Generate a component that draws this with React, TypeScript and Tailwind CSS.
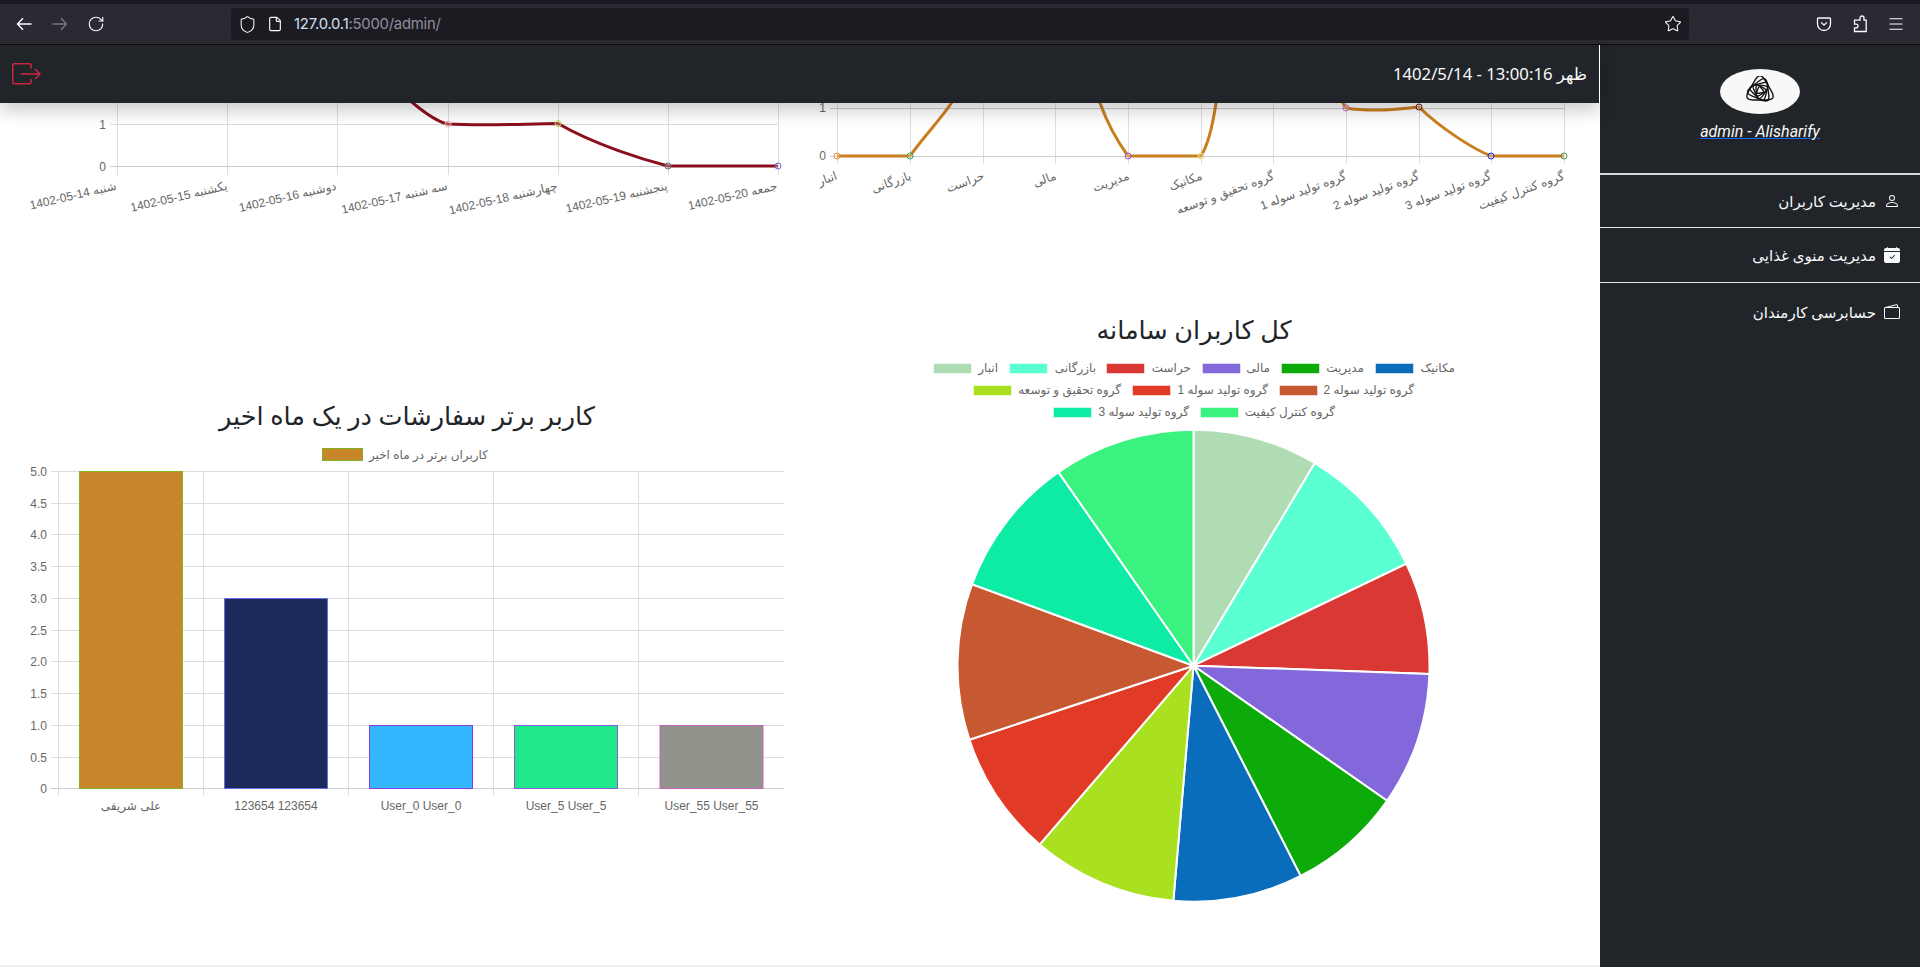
import React from "react";
import { BsPerson, BsCalendarCheckFill, BsWallet2 } from "react-icons/bs";
import { RotateCw, Shield, File, Star, Menu } from "lucide-react";

const chartFont = '"Liberation Sans", "DejaVu Sans", sans-serif';
const grid = "#dedede";
const gridDark = "#cccccc";
const label = "#666666";

function triangle(R: number, rot: number) {
  const t = 0.3;
  const c = [0, 120, 240].map((a) => {
    const r = ((a + rot - 90) * Math.PI) / 180;
    return [R * Math.cos(r), R * Math.sin(r)];
  });
  const mix = (a: number[], b: number[], k: number) => `${(a[0] + (b[0] - a[0]) * k).toFixed(2)} ${(a[1] + (b[1] - a[1]) * k).toFixed(2)}`;
  let d = `M ${mix(c[0], c[1], t)}`;
  for (let i = 0; i < 3; i++) {
    const p = c[(i + 1) % 3];
    const n = c[(i + 2) % 3];
    d += ` L ${mix(p, c[i], t)} Q ${p[0].toFixed(2)} ${p[1].toFixed(2)} ${mix(p, n, t)}`;
  }
  return d + " Z";
}

function Logo() {
  const rings = [19, 16.2, 13.4, 10.6, 7.8, 5];
  return (
    <svg width="32" height="32" viewBox="-16 -14.5 32 32" fill="none" stroke="#111" strokeWidth="1.35">
      {rings.map((R, i) => (
        <path key={R} d={triangle(R, i * 22)} />
      ))}
    </svg>
  );
}

function BrowserBar() {
  return (
    <div className="shrink-0">
      <div className="h-1 bg-[#1c1b22]" />
      <div className="flex h-10 items-center bg-[#2b2a33] text-[#fbfbfe]">
        <div className="flex w-[231px] items-center">
          <svg width="16" height="16" viewBox="0 0 16 16" fill="none" stroke="currentColor" strokeWidth="1.4" className="ml-4">
            <path d="M15.5 8H1.5M7 2.2 1.5 8 7 13.8" />
          </svg>
          <svg width="16" height="16" viewBox="0 0 16 16" fill="none" stroke="currentColor" strokeWidth="1.4" className="ml-5 text-[#77767c]">
            <path d="M.5 8h14M9 2.2 14.5 8 9 13.8" />
          </svg>
          <RotateCw size={18} strokeWidth={1.5} className="ml-[19px]" />
        </div>
        <div className="flex h-8 w-[1458px] items-center rounded bg-[#1c1b22] pl-[7px]" style={{ fontFamily: '"Inter", sans-serif' }}>
          <Shield size={19} strokeWidth={1.3} />
          <File size={16} strokeWidth={1.7} className="ml-[10px]" />
          <span className="ml-[11px] text-[14.8px] tracking-[-0.2px] text-[#cfe0f5]">
            127.0.0.1<span className="text-[#8f8f9d]">:5000/admin/</span>
          </span>
          <Star size={18} strokeWidth={1.4} className="ml-auto mr-[7px]" />
        </div>
        <div className="ml-auto flex items-center">
          <svg width="16" height="16" viewBox="0 0 16 16" fill="none" stroke="currentColor" strokeWidth="1.3" className="mr-5">
            <path d="M2.5 2h11a1 1 0 0 1 1 1v5a6.5 6.5 0 0 1-13 0V3a1 1 0 0 1 1-1z" />
            <path d="M5.2 6.4 8 9.2l2.8-2.8" />
          </svg>
          <svg width="16" height="18" viewBox="0 0 16 18" fill="none" stroke="currentColor" strokeWidth="1.3" className="mr-[19px]">
            <path d="M8 4.5V3a2 2 0 0 1 4 0v2.2h2.2v11.3H2.5v-3.6h1.6a1.9 1.9 0 0 0 0-3.8H2.5V5.2H8z" />
          </svg>
          <Menu size={18} strokeWidth={1.5} className="mr-[15px]" />
        </div>
      </div>
      <div className="h-px bg-[#0c0c0d]" />
    </div>
  );
}

function Header() {
  return (
    <header className="relative z-10 flex h-[58px] shrink-0 items-center justify-between border-r border-white bg-[#212529] pl-3 pr-3 shadow-[0_8px_16px_rgba(0,0,0,0.2)]">
      <svg width="29" height="22" viewBox="0 0 29 22" fill="none" stroke="#c9283e" strokeWidth="1.5">
        <path d="M19 5.5V2a1.2 1.2 0 0 0-1.2-1.2H1.9A1.2 1.2 0 0 0 .8 2v17.6a1.2 1.2 0 0 0 1.2 1.2h15.8a1.2 1.2 0 0 0 1.2-1.2V16" />
        <path d="M9 11h19M23 6l5 5-5 5" />
      </svg>
      <div dir="rtl" className="text-[16.7px] text-[#f8f9fa]" style={{ fontFamily: '"Noto Sans", "DejaVu Sans", sans-serif' }}>
        ظهر 13:00:16 - 1402/5/14
      </div>
    </header>
  );
}

function Ring({ x, y, c }: { x: number; y: number; c: string }) {
  return <circle cx={x} cy={y} r={3} fill="rgba(255,255,255,0.25)" stroke={c} strokeWidth={1} />;
}

const weekLabels: [number, string][] = [
  [117, "1402-05-14 شنبه"],
  [228, "1402-05-15 یکشنبه"],
  [337, "1402-05-16 دوشنبه"],
  [448, "1402-05-17 سه شنبه"],
  [558, "1402-05-18 چهارشنبه"],
  [668, "1402-05-19 پنجشنبه"],
  [778, "1402-05-20 جمعه"],
];

function WeekChart() {
  const xs = [117.5, 227.5, 337.5, 448.5, 558.5, 668.5, 778.5];
  return (
    <svg width="800" height="197" viewBox="0 103 800 197" style={{ fontFamily: chartFont }}>
      {xs.map((x) => (
        <line key={x} x1={x} x2={x} y1="95" y2="175" stroke={grid} />
      ))}
      <line x1="110" x2="779" y1="124.5" y2="124.5" stroke={grid} />
      <line x1="110" x2="779" y1="166.5" y2="166.5" stroke={gridDark} />
      <text x="106" y="129" fontSize="12" fill={label} textAnchor="end">1</text>
      <text x="106" y="171" fontSize="12" fill={label} textAnchor="end">0</text>
      <path d="M405 97 L413 103 C425 113 438 122 448 124 C485 126 520 124 558 123.5 C595 145 645 160 668 166 L778 166" fill="none" stroke="#8b0f1c" strokeWidth="3" />
      <Ring x={448} y={124} c="#e8b9b0" />
      <Ring x={558} y={123.5} c="#c6d44a" />
      <Ring x={668} y={166} c="#666a7a" />
      <Ring x={778} y={166} c="#6a66d8" />
      {weekLabels.map(([x, t]) => (
        <text key={x} x={x} y={189.5} fontSize="12" fill={label} textAnchor="end" transform={`rotate(-13 ${x} 189.5)`}>{t}</text>
      ))}
    </svg>
  );
}

const deptLabels: [number, string][] = [
  [838, "انبار"],
  [912, "بازرگانی"],
  [985, "حراست"],
  [1057, "مالی"],
  [1130, "مدیریت"],
  [1203, "مکانیک"],
  [1275, "گروه تحقیق و توسعه"],
  [1347, "گروه تولید سوله 1"],
  [1420, "گروه تولید سوله 2"],
  [1492, "گروه تولید سوله 3"],
  [1565, "گروه کنترل کیفیت"],
];

function DeptChart() {
  const xs = [837.5, 910.5, 983.5, 1055.5, 1128.5, 1201.5, 1273.5, 1346.5, 1419.5, 1491.5, 1564.5];
  return (
    <svg width="800" height="197" viewBox="800 103 800 197" style={{ fontFamily: chartFont }}>
      {xs.map((x) => (
        <line key={x} x1={x} x2={x} y1="95" y2="164" stroke={grid} />
      ))}
      <line x1="830" x2="1565" y1="108.5" y2="108.5" stroke={gridDark} />
      <line x1="830" x2="1565" y1="156.5" y2="156.5" stroke={gridDark} />
      <text x="826" y="112" fontSize="12" fill={label} textAnchor="end">1</text>
      <text x="826" y="160" fontSize="12" fill={label} textAnchor="end">0</text>
      <path d="M837 156 L910 156 C925 135 940 120 951.5 103 L960 90 M1098 95 L1100 103 C1108 125 1120 145 1128 156 L1201 156 C1206 148 1212 130 1216 103 L1218 90 M1340 95 L1343 103 C1345 107 1346 108 1346 108 C1370 112 1395 110 1419 107 C1440 128 1475 150 1491 156 L1564 156" fill="none" stroke="#ca7f1f" strokeWidth="3" />
      <Ring x={837} y={156} c="#e8903a" />
      <Ring x={910} y={156} c="#2fa86a" />
      <Ring x={1128} y={156} c="#9c4fc4" />
      <Ring x={1201} y={156} c="#e8e070" />
      <Ring x={1346} y={108} c="#d86cb8" />
      <Ring x={1419} y={107} c="#7a1420" />
      <Ring x={1491} y={156} c="#1a2ce0" />
      <Ring x={1564} y={156} c="#4a9040" />
      {deptLabels.map(([x, t]) => (
        <text key={x} x={x} y={179} fontSize="12" fill={label} textAnchor="end" transform={`rotate(-20 ${x} 179)`}>{t}</text>
      ))}
    </svg>
  );
}

const yTicks = ["5.0", "4.5", "4.0", "3.5", "3.0", "2.5", "2.0", "1.5", "1.0", "0.5", "0"];
const bars = [
  { x: 79, y: 471, fill: "#c8862b", stroke: "#7fb51f", name: "علی شریفی" },
  { x: 224, y: 598, fill: "#1b2c5a", stroke: "#6a6ae8", name: "123654 123654" },
  { x: 369, y: 725, fill: "#33b8ff", stroke: "#8a3ee0", name: "User_0 User_0" },
  { x: 514, y: 725, fill: "#20e88a", stroke: "#8a5ae0", name: "User_5 User_5" },
  { x: 659.5, y: 725, fill: "#92948c", stroke: "#c860c8", name: "User_55 User_55" },
];

function BarChart() {
  return (
    <svg width="800" height="380" viewBox="0 441 800 380" style={{ fontFamily: chartFont }}>
      <rect x="322.5" y="448.5" width="40" height="12" fill="#c8862b" stroke="#7fb51f" />
      <text x="488" y="459" fontSize="12" fill={label} textAnchor="end">کاربران برتر در ماه اخیر</text>
      {[58.5, 203.5, 348.5, 493.5, 638.5].map((x) => (
        <line key={x} x1={x} x2={x} y1="471" y2="796" stroke={grid} />
      ))}
      {yTicks.map((t, i) => {
        const y = Math.round(471 + i * 31.73) + 0.5;
        return (
          <g key={t}>
            <line x1="51" x2="784" y1={y} y2={y} stroke={i === 10 ? gridDark : grid} />
            <text x="47" y={y + 4} fontSize="12" fill={label} textAnchor="end">{t}</text>
          </g>
        );
      })}
      {bars.map((b) => (
        <g key={b.x}>
          <rect x={b.x + 0.5} y={b.y + 0.5} width="103" height={788 - b.y} fill={b.fill} stroke={b.stroke} />
          <text x={b.x + 52} y="810" fontSize="12" fill={label} textAnchor="middle">{b.name}</text>
        </g>
      ))}
    </svg>
  );
}

const slices = [
  { to: 30.9, c: "#b0dcb4", name: "انبار" },
  { to: 64.4, c: "#5affd2", name: "بازرگانی" },
  { to: 92, c: "#da3835", name: "حراست" },
  { to: 124.9, c: "#8268db", name: "مالی" },
  { to: 153, c: "#0dab09", name: "مدیریت" },
  { to: 184.9, c: "#0a6dbc", name: "مکانیک" },
  { to: 220.7, c: "#a9e01f", name: "گروه تحقیق و توسعه" },
  { to: 251.7, c: "#e13b27", name: "گروه تولید سوله 1" },
  { to: 290.2, c: "#c65932", name: "گروه تولید سوله 2" },
  { to: 325.1, c: "#0deba5", name: "گروه تولید سوله 3" },
  { to: 360, c: "#3af27f", name: "گروه کنترل کیفیت" },
];

const legend: { sx: number; tx: number; y: number; i: number }[] = [
  { sx: 933, tx: 998, y: 363, i: 0 },
  { sx: 1009, tx: 1096, y: 363, i: 1 },
  { sx: 1106, tx: 1191, y: 363, i: 2 },
  { sx: 1202, tx: 1270, y: 363, i: 3 },
  { sx: 1281, tx: 1364, y: 363, i: 4 },
  { sx: 1375, tx: 1455, y: 363, i: 5 },
  { sx: 973, tx: 1121, y: 385, i: 6 },
  { sx: 1132, tx: 1268, y: 385, i: 7 },
  { sx: 1279, tx: 1414, y: 385, i: 8 },
  { sx: 1053, tx: 1189, y: 407, i: 9 },
  { sx: 1200, tx: 1335, y: 407, i: 10 },
];

function PieChart() {
  const cx = 1193.5;
  const cy = 665.7;
  const r = 236;
  const pt = (a: number) => {
    const t = (a * Math.PI) / 180;
    return `${(cx + r * Math.sin(t)).toFixed(2)} ${(cy - r * Math.cos(t)).toFixed(2)}`;
  };
  let from = 0;
  return (
    <svg width="800" height="560" viewBox="800 356 800 560" style={{ fontFamily: chartFont }}>
      {legend.map((l) => (
        <g key={l.i}>
          <rect x={l.sx + 0.5} y={l.y + 0.5} width="38" height="10" fill={slices[l.i].c} stroke="rgba(255,255,255,0.5)" />
          <text x={l.tx} y={l.y + 9} fontSize="12" fill={label} textAnchor="end">{slices[l.i].name}</text>
        </g>
      ))}
      {slices.map((s) => {
        const d = `M ${cx} ${cy} L ${pt(from)} A ${r} ${r} 0 0 1 ${pt(s.to)} Z`;
        from = s.to;
        return <path key={s.name} d={d} fill={s.c} stroke="#fff" strokeWidth="2" />;
      })}
    </svg>
  );
}

function Title({ children, className }: { children: React.ReactNode; className: string }) {
  return (
    <h2 dir="rtl" className={`h-12 text-center text-[25.5px] leading-[48px] text-[#212529] ${className}`} style={{ fontFamily: '"Noto Sans", "DejaVu Sans", sans-serif' }}>
      {children}
    </h2>
  );
}

function Sidebar() {
  const items = [
    { icon: <BsPerson size={16} />, t: "مدیریت کاربران", h: "h-[53px]" },
    { icon: <BsCalendarCheckFill size={16} />, t: "مدیریت منوی غذایی", h: "h-[55px]" },
    { icon: <BsWallet2 size={16} />, t: "حسابرسی کارمندان", h: "h-[58px]" },
  ];
  return (
    <aside className="flex w-80 shrink-0 flex-col bg-[#212529] text-[#f8f9fa]">
      <div className="flex h-[130px] flex-col items-center border-b-2 border-[#d8d8d8] pt-6">
        <div className="flex h-[45px] w-20 items-center justify-center rounded-[50%] bg-[#f8f8f8]">
          <Logo />
        </div>
        <span className="mt-[6px] text-[16px] italic leading-6 underline decoration-[#0d6efd]" style={{ fontFamily: "Roboto, sans-serif" }}>
          admin - Alisharify
        </span>
      </div>
      {items.map((it, i) => (
        <div key={it.t} dir="rtl" className={`flex items-center gap-2 px-5 ${it.h} ${i < 2 ? "border-b border-[#e6e6e6]" : ""}`} style={{ fontFamily: '"Noto Sans", "DejaVu Sans", sans-serif' }}>
          {it.icon}
          <span className="text-[15px]">{it.t}</span>
        </div>
      ))}
    </aside>
  );
}

export default function App() {
  return (
    <div className="flex h-[967px] w-[1920px] flex-col overflow-hidden bg-white">
      <BrowserBar />
      <div className="flex min-h-0 flex-1">
        <main className="flex w-[1600px] shrink-0 flex-col border-b-2 border-[#f0f0f0]">
          <Header />
          <div className="grid h-[197px] shrink-0 grid-cols-2">
            <WeekChart />
            <DeptChart />
          </div>
          <div className="grid flex-1 grid-cols-2">
            <section className="pt-[91px]">
              <Title className="pl-[14px]">کاربر برتر سفارشات در یک ماه اخیر</Title>
              <div className="pt-[2px]"><BarChart /></div>
            </section>
            <section className="pt-[5px]">
              <Title className="pr-[12px]">کل کاربران سامانه</Title>
              <div className="pt-[3px]"><PieChart /></div>
            </section>
          </div>
        </main>
        <Sidebar />
      </div>
    </div>
  );
}
